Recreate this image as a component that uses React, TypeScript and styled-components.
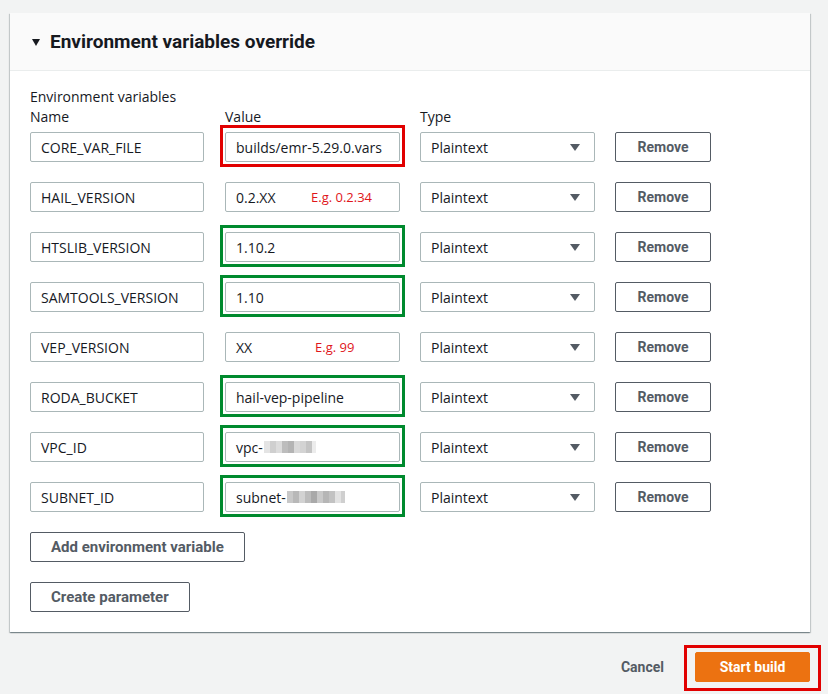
import React from "react";
import styled, { createGlobalStyle } from "styled-components";

const GlobalStyle = createGlobalStyle`
  html, body { margin: 0; padding: 0; }
  body {
    background: #f2f3f3;
    font-family: "Open Sans", "Noto Sans", sans-serif;
    color: #16191f;
  }
`;

const Page = styled.div`
  padding: 13px 18px 0 10px;
  width: 800px;
`;

const Panel = styled.section`
  background: #fff;
  box-shadow: 0 1px 1px 0 rgba(0, 28, 36, 0.3), 1px 1px 1px 0 rgba(0, 28, 36, 0.15),
    -1px 1px 1px 0 rgba(0, 28, 36, 0.15);
`;

const PanelHeader = styled.header`
  height: 58px;
  box-sizing: border-box;
  background: #fafafa;
  border-bottom: 1px solid #eaeded;
  display: flex;
  align-items: center;
  padding: 1px 0 0 22px;
  gap: 10px;
`;

const Caret = styled.span<{ $color?: string; $w?: number; $h?: number }>`
  display: inline-block;
  width: 0;
  height: 0;
  border-left: ${(p) => (p.$w ?? 8) / 2}px solid transparent;
  border-right: ${(p) => (p.$w ?? 8) / 2}px solid transparent;
  border-top: ${(p) => p.$h ?? 7}px solid ${(p) => p.$color ?? "#16191f"};
`;

const Title = styled.h2`
  margin: 0;
  font-family: Roboto, "Noto Sans", sans-serif;
  font-weight: 700;
  font-size: 19px;
  line-height: 22px;
  color: #16191f;
`;

const PanelBody = styled.div`
  padding: 16px 20px 20px 20px;
  display: flex;
  flex-direction: column;
`;

const Label = styled.div`
  font-size: 14px;
  line-height: 20px;
  color: #16191f;
`;

const Grid = styled.div`
  display: grid;
  grid-template-columns: 175px 175px 175px 96px;
  column-gap: 20px;
  row-gap: 20px;
  align-items: center;
`;

const HeaderRow = styled(Grid)`
  margin-bottom: 5px;
`;

const Field = styled.div<{ $w?: number }>`
  position: relative;
  box-sizing: border-box;
  width: ${(p) => p.$w ?? 175}px;
  height: 30px;
  border: 1px solid #aab7b8;
  border-radius: 2px;
  background: #fff;
  padding: 0 10px;
  display: flex;
  align-items: center;
  font-size: 14px;
  color: #16191f;
  white-space: nowrap;
`;

const SelectBox = styled(Field)`
  justify-content: space-between;
  padding-right: 14px;
`;

const Hint = styled.span<{ $left: number }>`
  position: absolute;
  left: ${(p) => p.$left}px;
  top: 6px;
  font-size: 13px;
  line-height: 16px;
  color: #e0161b;
`;

const Annotated = styled.div<{ $color: string }>`
  position: relative;
  &::after {
    content: "";
    position: absolute;
    top: -7px;
    bottom: -5px;
    left: -5px;
    right: -5px;
    border: 3px solid ${(p) => p.$color};
    pointer-events: none;
  }
`;

const Blur = styled.span`
  display: inline-flex;
  height: 12px;
  margin-left: 1px;
`;

const BlurCell = styled.span<{ $c: string; $w: number }>`
  display: inline-block;
  width: ${(p) => p.$w}px;
  height: 12px;
  background: ${(p) => p.$c};
`;

const NormalButton = styled.button`
  box-sizing: border-box;
  height: 30px;
  border: 1px solid #545b64;
  border-radius: 2px;
  background: #fff;
  color: #545b64;
  font-family: Roboto, "Noto Sans", sans-serif;
  font-weight: 700;
  font-size: 15px;
  padding: 0 20px;
  cursor: pointer;
`;

const RemoveButton = styled(NormalButton)`
  width: 96px;
  padding: 0;
  font-size: 14px;
`;

const Stack = styled.div`
  display: flex;
  flex-direction: column;
  align-items: flex-start;
  gap: 20px;
  margin-top: 20px;
`;

const Footer = styled.footer`
  display: flex;
  justify-content: flex-end;
  align-items: center;
  padding: 20px 0 12px;
`;

const LinkButton = styled.button`
  border: none;
  background: transparent;
  color: #545b64;
  font-family: Roboto, "Noto Sans", sans-serif;
  font-weight: 700;
  font-size: 14px;
  padding: 0;
  margin-right: 31px;
  cursor: pointer;
`;

const PrimaryAnnotated = styled.div`
  position: relative;
  &::after {
    content: "";
    position: absolute;
    top: -7px;
    bottom: -9px;
    left: -11px;
    right: -11px;
    border: 3px solid #e10000;
    pointer-events: none;
  }
`;

const PrimaryButton = styled.button`
  box-sizing: border-box;
  width: 115px;
  height: 30px;
  border: 1px solid #ec7211;
  border-radius: 2px;
  background: #ec7211;
  color: #fff;
  font-family: Roboto, "Noto Sans", sans-serif;
  font-weight: 700;
  font-size: 14px;
  cursor: pointer;
`;

type Mark = "red" | "green" | undefined;

interface Row {
  name: string;
  value: React.ReactNode;
  hint?: { text: string; left: number };
  mark?: Mark;
}

const blurVpc: [string, number][] = [
  ["#e4e4e4", 6],
  ["#cfcfcf", 6],
  ["#dcdcdc", 6],
  ["#bdbdbd", 6],
  ["#b4b4b4", 6],
  ["#d9d9d9", 6],
  ["#d3d3d3", 6],
  ["#c4c4c4", 6],
  ["#ececec", 4],
];
const blurSubnet: [string, number][] = [
  ["#c8c8c8", 6],
  ["#b8b8b8", 6],
  ["#d2d2d2", 6],
  ["#bcbcbc", 6],
  ["#a9a9a9", 6],
  ["#c9c9c9", 6],
  ["#b6b6b6", 6],
  ["#c2c2c2", 6],
  ["#e2e2e2", 6],
  ["#cfcfcf", 4],
];

const BlurBlock = ({ cells }: { cells: [string, number][] }) => (
  <Blur>
    {cells.map(([c, w], i) => (
      <BlurCell key={i} $c={c} $w={w} />
    ))}
  </Blur>
);

const rows: Row[] = [
  { name: "CORE_VAR_FILE", value: "builds/emr-5.29.0.vars", mark: "red" },
  { name: "HAIL_VERSION", value: "0.2.XX", hint: { text: "E.g. 0.2.34", left: 85 } },
  { name: "HTSLIB_VERSION", value: "1.10.2", mark: "green" },
  { name: "SAMTOOLS_VERSION", value: "1.10", mark: "green" },
  { name: "VEP_VERSION", value: "XX", hint: { text: "E.g. 99", left: 89 } },
  { name: "RODA_BUCKET", value: "hail-vep-pipeline", mark: "green" },
  {
    name: "VPC_ID",
    value: (
      <>
        vpc-
        <BlurBlock cells={blurVpc} />
      </>
    ),
    mark: "green",
  },
  {
    name: "SUBNET_ID",
    value: (
      <>
        subnet-
        <BlurBlock cells={blurSubnet} />
      </>
    ),
    mark: "green",
  },
];

const markColor = (m: Mark) => (m === "red" ? "#e10000" : "#008a2e");

const ValueCell = ({ row }: { row: Row }) => {
  const field = (
    <Field>
      {row.value}
      {row.hint && <Hint $left={row.hint.left}>{row.hint.text}</Hint>}
    </Field>
  );
  if (!row.mark) return field;
  return <Annotated $color={markColor(row.mark)}>{field}</Annotated>;
};

export default function App() {
  return (
    <>
      <GlobalStyle />
      <Page>
        <Panel>
          <PanelHeader>
            <Caret $w={9} $h={7} />
            <Title>Environment variables override</Title>
          </PanelHeader>
          <PanelBody>
            <Label>Environment variables</Label>
            <HeaderRow>
              <Label>Name</Label>
              <Label>Value</Label>
              <Label>Type</Label>
              <span />
            </HeaderRow>
            <Grid>
              {rows.map((row) => (
                <React.Fragment key={row.name}>
                  <Field $w={174}>{row.name}</Field>
                  <ValueCell row={row} />
                  <SelectBox>
                    Plaintext
                    <Caret $color="#545b64" $w={10} $h={7} />
                  </SelectBox>
                  <RemoveButton>Remove</RemoveButton>
                </React.Fragment>
              ))}
            </Grid>
            <Stack>
              <NormalButton>Add environment variable</NormalButton>
              <NormalButton>Create parameter</NormalButton>
            </Stack>
          </PanelBody>
        </Panel>
        <Footer>
          <LinkButton>Cancel</LinkButton>
          <PrimaryAnnotated>
            <PrimaryButton>Start build</PrimaryButton>
          </PrimaryAnnotated>
        </Footer>
      </Page>
    </>
  );
}
